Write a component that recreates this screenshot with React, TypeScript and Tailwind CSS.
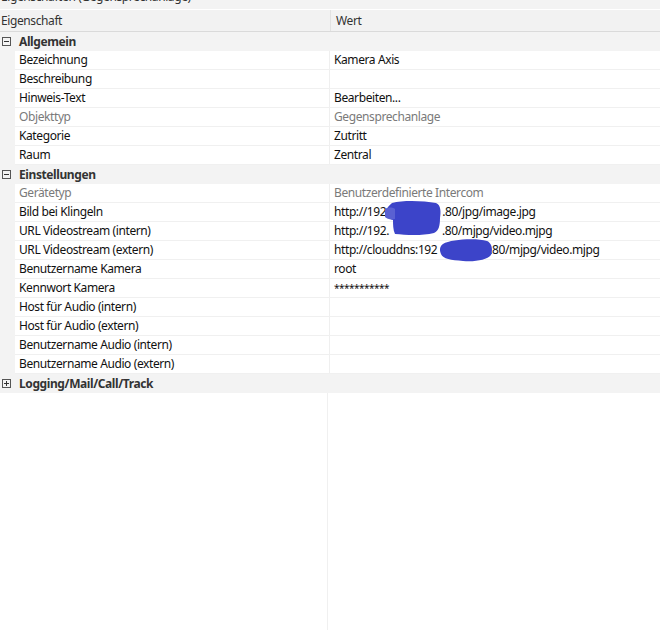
import React from "react";

type Row = {
  label: string;
  value?: string;
  muted?: boolean;
  value_node?: React.ReactNode;
};

type Group = { name: string; open: boolean; rows: Row[] };

// scribbles used to hide parts of the IP address
function BlobBig() {
  return (
    <svg className="absolute z-10 pointer-events-none left-[-5px] top-[-25px]" width="58" height="36" viewBox="0 0 58 36">
      <path
        d="M8 3 C20 0 40 1 52 3 C57 5 57 12 56 18 C56 25 55 31 50 33 C38 36 22 35 11 34 C9 30 9 24 9 20 C4 19 1 15 2 11 C3 7 6 5 8 3 Z"
        fill="#3c44c9"
      />
      <path d="M1 9 C4 7 9 7 11 9 L11 19 C7 20 3 19 1 17 Z" fill="#5a61d2" />
    </svg>
  );
}

function BlobSmall() {
  return (
    <svg className="absolute z-10 pointer-events-none left-[0px] top-[-6px]" width="56" height="24" viewBox="0 0 56 24">
      <path
        d="M6 6 C14 1 40 0 50 3 C55 5 56 12 54 17 C50 22 38 24 26 23 C14 22 6 21 4 16 C2 12 3 8 6 6 Z"
        fill="#3c44c9"
      />
    </svg>
  );
}

function Hidden({ w, children }: { w: number; children?: React.ReactNode }) {
  return (
    <span className="relative inline-block h-[12px]" style={{ width: w }}>
      {children}
    </span>
  );
}

const groups: Group[] = [
  {
    name: "Allgemein",
    open: true,
    rows: [
      { label: "Bezeichnung", value: "Kamera Axis" },
      { label: "Beschreibung", value: "" },
      { label: "Hinweis-Text", value: "Bearbeiten..." },
      { label: "Objekttyp", value: "Gegensprechanlage", muted: true },
      { label: "Kategorie", value: "Zutritt" },
      { label: "Raum", value: "Zentral" },
    ],
  },
  {
    name: "Einstellungen",
    open: true,
    rows: [
      { label: "Gerätetyp", value: "Benutzerdefinierte Intercom", muted: true },
      {
        label: "Bild bei Klingeln",
        value_node: (
          <>
            http://192
            <Hidden w={56} />
            .80/jpg/image.jpg
          </>
        ),
      },
      {
        label: "URL Videostream (intern)",
        value_node: (
          <>
            http://192.
            <Hidden w={53}>
              <BlobBig />
            </Hidden>
            .80/mjpg/video.mjpg
          </>
        ),
      },
      {
        label: "URL Videostream (extern)",
        value_node: (
          <>
            http://clouddns:192
            <Hidden w={52}>
              <BlobSmall />
            </Hidden>
            .80/mjpg/video.mjpg
          </>
        ),
      },
      { label: "Benutzername Kamera", value: "root" },
      {
        label: "Kennwort Kamera",
        value_node: <span className="text-[10px] tracking-[-0.5px] pt-[1px]">***********</span>,
      },
      { label: "Host für Audio (intern)", value: "" },
      { label: "Host für Audio (extern)", value: "" },
      { label: "Benutzername Audio (intern)", value: "" },
      { label: "Benutzername Audio (extern)", value: "" },
    ],
  },
  { name: "Logging/Mail/Call/Track", open: false, rows: [] },
];

function BoxIcon({ open }: { open: boolean }) {
  return (
    <svg width="9" height="9" viewBox="0 0 9 9" className="shrink-0">
      <rect x="0.5" y="0.5" width="8" height="8" fill="none" stroke="#555" />
      <path d="M2 4.5h5" stroke="#333" />
      {!open && <path d="M4.5 2v5" stroke="#333" />}
    </svg>
  );
}

export default function App() {
  return (
    <div
      className="w-[660px] h-[630px] overflow-hidden bg-white flex flex-col text-[12px] tracking-[-0.4px] text-[#111]"
      style={{ fontFamily: '"Segoe UI", "Noto Sans", sans-serif' }}
    >
      <div className="h-[24px] -mt-[15px] shrink-0 bg-[#f3f3f3] flex items-center justify-between pl-[1px] pr-[3px] text-[#333]">
        <span>Eigenschaften (Gegensprechanlage)</span>
        <span className="text-[14px] leading-none">+</span>
      </div>
      <div className="h-[1px] bg-white shrink-0" />
      <div className="h-[22px] shrink-0 bg-[#f2f2f2] border-b border-[#dadada] flex text-[#333]">
        <div className="w-[330px] pl-[1px] flex items-center">Eigenschaft</div>
        <div className="flex-1 border-l border-[#e2e2e2] pl-[5px] flex items-center">Wert</div>
      </div>
      <div className="flex-1 flex flex-col">
        {groups.map((g) => (
          <div key={g.name} className="flex flex-col">
            <div className="h-[19px] bg-[#f3f3f3] flex items-center gap-[8px] pl-[2px] font-bold text-[#333]">
              <BoxIcon open={g.open} />
              <span>{g.name}</span>
            </div>
            {g.rows.map((r) => (
              <div key={r.label} className="h-[19px] flex bg-[#f3f3f3]">
                <div className="w-[15px] shrink-0" />
                <div className="flex-1 flex bg-white border-b border-[#f0f0f0]">
                  <div
                    className={`w-[314px] pl-[4px] flex items-center whitespace-nowrap ${r.muted ? "text-[#7a7a7a]" : ""}`}
                  >
                    {r.label}
                  </div>
                  <div
                    className={`flex-1 border-l border-[#efefef] pl-[4px] flex items-center whitespace-nowrap ${r.muted ? "text-[#7a7a7a]" : ""}`}
                  >
                    {r.value_node ?? r.value}
                  </div>
                </div>
              </div>
            ))}
          </div>
        ))}
        <div className="flex-1 flex">
          <div className="w-[328px] border-r border-[#f0f0f0]" />
          <div className="flex-1" />
        </div>
      </div>
    </div>
  );
}
